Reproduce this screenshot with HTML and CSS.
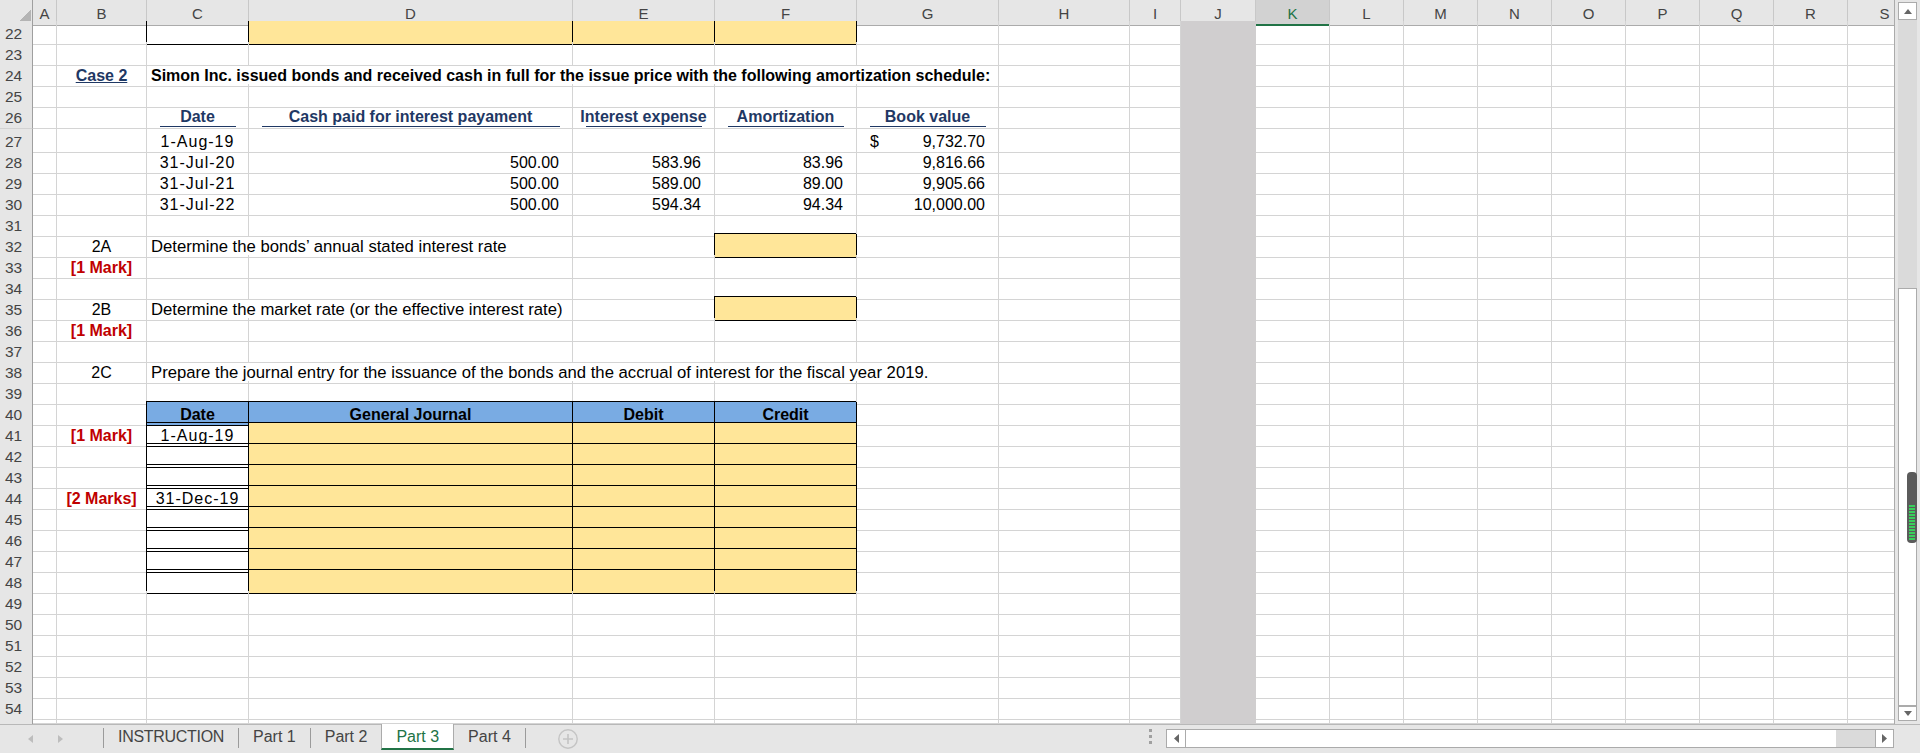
FILE: index.html
```html
<!DOCTYPE html>
<html lang="en">
<head>
<meta charset="utf-8">
<title>Part 3</title>
<link rel="stylesheet" href="styles.css">
</head>
<body>
<div class="app">
  <div class="main">
    <div class="sheet">
      <div class="row hdr"><b class="corner"></b><i>A</i><i>B</i><i>C</i><i>D</i><i>E</i><i>F</i><i>G</i><i>H</i><i>I</i><i>J</i><i class="sel">K</i><i>L</i><i>M</i><i>N</i><i>O</i><i>P</i><i>Q</i><i>R</i><i>S</i></div>
      <div class="row"><b class="rh">22</b><i></i><i></i><i class="bl"></i><i class="bl y"></i><i class="bl y"></i><i class="bl y"></i><i></i><i></i><i></i><i class="rest"></i></div>
      <div class="row"><b class="rh">23</b><i></i><i></i><i></i><i></i><i></i><i></i><i></i><i></i><i></i><i class="rest"></i></div>
      <div class="row"><b class="rh">24</b><i></i><i class="case">Case 2</i><i class="title s5">Simon Inc. issued bonds and received cash in full for the issue price with the following amortization schedule:</i><i></i><i></i><i class="rest"></i></div>
      <div class="row"><b class="rh">25</b><i></i><i></i><i></i><i></i><i></i><i></i><i></i><i></i><i></i><i class="rest"></i></div>
      <div class="row tall"><b class="rh">26</b><i></i><i></i><i class="th"><span>Date</span></i><i class="th"><span>Cash paid for interest payament</span></i><i class="th"><span>Interest expense</span></i><i class="th"><span>Amortization</span></i><i class="th"><span>Book value</span></i><i></i><i></i><i class="rest"></i></div>
      <div class="row"><b class="rh">27</b><i></i><i></i><i class="dt">1-Aug-19</i><i></i><i></i><i></i><i class="acc"><span>$</span><span>9,732.70</span></i><i></i><i></i><i class="rest"></i></div>
      <div class="row"><b class="rh">28</b><i></i><i></i><i class="dt">31-Jul-20</i><i class="num">500.00</i><i class="num">583.96</i><i class="num">83.96</i><i class="num">9,816.66</i><i></i><i></i><i class="rest"></i></div>
      <div class="row"><b class="rh">29</b><i></i><i></i><i class="dt">31-Jul-21</i><i class="num">500.00</i><i class="num">589.00</i><i class="num">89.00</i><i class="num">9,905.66</i><i></i><i></i><i class="rest"></i></div>
      <div class="row"><b class="rh">30</b><i></i><i></i><i class="dt">31-Jul-22</i><i class="num">500.00</i><i class="num">594.34</i><i class="num">94.34</i><i class="num">10,000.00</i><i></i><i></i><i class="rest"></i></div>
      <div class="row"><b class="rh">31</b><i></i><i></i><i></i><i></i><i></i><i></i><i></i><i></i><i></i><i class="rest"></i></div>
      <div class="row"><b class="rh">32</b><i></i><i class="ctr">2A</i><i class="txt s2">Determine the bonds’ annual stated interest rate</i><i></i><i class="bx y"></i><i></i><i></i><i></i><i class="rest"></i></div>
      <div class="row"><b class="rh">33</b><i></i><i class="mark">[1 Mark]</i><i></i><i></i><i></i><i></i><i></i><i></i><i></i><i class="rest"></i></div>
      <div class="row"><b class="rh">34</b><i></i><i></i><i></i><i></i><i></i><i></i><i></i><i></i><i></i><i class="rest"></i></div>
      <div class="row"><b class="rh">35</b><i></i><i class="ctr">2B</i><i class="txt s2">Determine the market rate (or the effective interest rate)</i><i></i><i class="bx y"></i><i></i><i></i><i></i><i class="rest"></i></div>
      <div class="row"><b class="rh">36</b><i></i><i class="mark">[1 Mark]</i><i></i><i></i><i></i><i></i><i></i><i></i><i></i><i class="rest"></i></div>
      <div class="row"><b class="rh">37</b><i></i><i></i><i></i><i></i><i></i><i></i><i></i><i></i><i></i><i class="rest"></i></div>
      <div class="row"><b class="rh">38</b><i></i><i class="ctr">2C</i><i class="txt s5">Prepare the journal entry for the issuance of the bonds and the accrual of interest for the fiscal year 2019.</i><i></i><i></i><i class="rest"></i></div>
      <div class="row"><b class="rh">39</b><i></i><i></i><i></i><i></i><i></i><i></i><i></i><i></i><i></i><i class="rest"></i></div>
      <div class="row"><b class="rh">40</b><i></i><i></i><i class="bx hb">Date</i><i class="bx hb">General Journal</i><i class="bx hb">Debit</i><i class="bx hb">Credit</i><i></i><i></i><i></i><i class="rest"></i></div>
      <div class="row"><b class="rh">41</b><i></i><i class="mark">[1 Mark]</i><i class="bx dt">1-Aug-19</i><i class="bx y"></i><i class="bx y"></i><i class="bx y"></i><i></i><i></i><i></i><i class="rest"></i></div>
      <div class="row"><b class="rh">42</b><i></i><i></i><i class="bx"></i><i class="bx y"></i><i class="bx y"></i><i class="bx y"></i><i></i><i></i><i></i><i class="rest"></i></div>
      <div class="row"><b class="rh">43</b><i></i><i></i><i class="bx"></i><i class="bx y"></i><i class="bx y"></i><i class="bx y"></i><i></i><i></i><i></i><i class="rest"></i></div>
      <div class="row"><b class="rh">44</b><i></i><i class="mark">[2 Marks]</i><i class="bx dt">31-Dec-19</i><i class="bx y"></i><i class="bx y"></i><i class="bx y"></i><i></i><i></i><i></i><i class="rest"></i></div>
      <div class="row"><b class="rh">45</b><i></i><i></i><i class="bx"></i><i class="bx y"></i><i class="bx y"></i><i class="bx y"></i><i></i><i></i><i></i><i class="rest"></i></div>
      <div class="row"><b class="rh">46</b><i></i><i></i><i class="bx"></i><i class="bx y"></i><i class="bx y"></i><i class="bx y"></i><i></i><i></i><i></i><i class="rest"></i></div>
      <div class="row"><b class="rh">47</b><i></i><i></i><i class="bx"></i><i class="bx y"></i><i class="bx y"></i><i class="bx y"></i><i></i><i></i><i></i><i class="rest"></i></div>
      <div class="row"><b class="rh">48</b><i></i><i></i><i class="bx"></i><i class="bx y"></i><i class="bx y"></i><i class="bx y"></i><i></i><i></i><i></i><i class="rest"></i></div>
      <div class="row"><b class="rh">49</b><i></i><i></i><i></i><i></i><i></i><i></i><i></i><i></i><i></i><i class="rest"></i></div>
      <div class="row"><b class="rh">50</b><i></i><i></i><i></i><i></i><i></i><i></i><i></i><i></i><i></i><i class="rest"></i></div>
      <div class="row"><b class="rh">51</b><i></i><i></i><i></i><i></i><i></i><i></i><i></i><i></i><i></i><i class="rest"></i></div>
      <div class="row"><b class="rh">52</b><i></i><i></i><i></i><i></i><i></i><i></i><i></i><i></i><i></i><i class="rest"></i></div>
      <div class="row"><b class="rh">53</b><i></i><i></i><i></i><i></i><i></i><i></i><i></i><i></i><i></i><i class="rest"></i></div>
      <div class="row"><b class="rh">54</b><i></i><i></i><i></i><i></i><i></i><i></i><i></i><i></i><i></i><i class="rest"></i></div>
      <div class="row part"><b class="rh"></b><i></i><i></i><i></i><i></i><i></i><i></i><i></i><i></i><i></i><i class="rest"></i></div>
    </div>
    <div class="vscroll">
      <div class="vs-btn up"><svg width="8" height="5" viewBox="0 0 8 5"><polygon points="0,5 8,5 4,0" fill="#666"/></svg></div>
      <div class="vs-track"></div>
      <div class="vs-thumb"><div class="pill"></div></div>
      <div class="vs-btn down"><svg width="8" height="5" viewBox="0 0 8 5"><polygon points="0,0 8,0 4,5" fill="#666"/></svg></div>
    </div>
  </div>
  <div class="tabbar">
    <div class="nav">
      <svg width="5" height="8" viewBox="0 0 5 8"><polygon points="5,0 5,8 0,4" fill="#bdbdbd"/></svg>
      <svg width="5" height="8" viewBox="0 0 5 8"><polygon points="0,0 0,8 5,4" fill="#bdbdbd"/></svg>
    </div>
    <span class="sep"></span>
    <span class="tab tight">INSTRUCTION</span>
    <span class="sep"></span>
    <span class="tab">Part 1</span>
    <span class="sep"></span>
    <span class="tab">Part 2</span>
    <span class="tab active">Part 3</span>
    <span class="tab">Part 4</span>
    <span class="sep"></span>
    <span class="add"><svg width="20" height="20" viewBox="0 0 20 20"><circle cx="10" cy="10" r="9.2" fill="none" stroke="#c4c4c4" stroke-width="1.4"/><path d="M10 5v10M5 10h10" stroke="#c4c4c4" stroke-width="1.6"/></svg></span>
    <span class="spacer"></span>
    <span class="grip"></span>
    <div class="hscroll">
      <span class="hs-btn l"><svg width="5" height="9" viewBox="0 0 5 9"><polygon points="5,0 5,9 0,4.5" fill="#666"/></svg></span>
      <span class="hs-thumb"></span>
      <span class="hs-track"></span>
      <span class="hs-btn r"><svg width="5" height="9" viewBox="0 0 5 9"><polygon points="0,0 0,9 5,4.5" fill="#666"/></svg></span>
    </div>
    <span class="corner2"></span>
  </div>
</div>
</body>
</html>
```
FILE: styles.css
```css
* { box-sizing: border-box; }
html, body { margin: 0; padding: 0; }
body {
  width: 1920px;
  height: 753px;
  overflow: hidden;
  background: #fff;
  color: #000;
  font-family: "Liberation Sans", Arial, sans-serif;
  font-size: 16px;
}
.app { display: flex; flex-direction: column; height: 753px; }
.main { display: flex; height: 724px; flex: none; }
.sheet {
  width: 1894px;
  flex: none;
  overflow: hidden;
  display: flex;
  flex-direction: column;
}
.row {
  display: grid;
  grid-template-columns: 33px 24px 90px 102px 324px 142px 142px 142px 131px 51px 75px repeat(9, 74px);
  height: 21px;
  flex: none;
}
.row.tall { height: 24px; }
.row.part { height: 7px; overflow: hidden; }
.row > i {
  font-style: normal;
  border-right: 1px solid #d4d4d4;
  border-bottom: 1px solid #d4d4d4;
  padding: 2px 4px 0;
  line-height: 21px;
  white-space: nowrap;
}
.row > .rh {
  font: 400 15.5px "Liberation Sans Narrow", "Liberation Sans", Arial, sans-serif;
  color: #444;
  background: #e6e6e6;
  border-right: 1px solid #9f9f9f;
  border-bottom: 1px solid #d2d2d2;
  text-align: center;
  padding: 2px 5px 0 0;
  line-height: 21px;
}
.row.part > .rh { border-bottom: 0; }
.hdr > i {
  text-align: center;
  font-family: "Liberation Sans Narrow", "Liberation Sans", Arial, sans-serif;
  font-size: 15px;
  color: #444;
  background: #e6e6e6;
  border-right-color: #c8c8c8;
  border-bottom-color: #ababab;
  padding: 3px 0 0;
}
.hdr > .sel {
  background: #d2d2d2;
  color: #217346;
  border-bottom: 2px solid #217346;
}
.row > .corner {
  background-color: #e6e6e6;
  background-image: linear-gradient(to bottom right, transparent 50%, #b4b4b4 50%);
  background-repeat: no-repeat;
  background-size: 15px 14px;
  background-position: right 1px bottom 1px;
  border-right: 1px solid #9f9f9f;
  border-bottom: 1px solid #ababab;
}
.row > .rest {
  grid-column: span 10;
  border: 0;
  padding: 0;
  background:
    linear-gradient(#d0cecf, #d0cecf) 0 0 / 75px 100% no-repeat,
    linear-gradient(#d4d4d4, #d4d4d4) 0 100% / 100% 1px no-repeat,
    repeating-linear-gradient(90deg, transparent 0 73px, #d4d4d4 73px 74px) 75px 0 / 100% 100% no-repeat;
}
.s2 { grid-column: span 2; }
.s5 { grid-column: span 5; }
.row > .txt { font-size: 16.7px; }

.row > .y { background: #ffe699; }
.row > .hb { background: #79abe3; font-weight: 700; text-align: center; }
.row > .bx {
  border-right-color: #000;
  border-bottom-color: #000;
  box-shadow: -1px -1px 0 #000;
}
.row > .bl {
  border-right-color: #000;
  border-bottom-color: #000;
  box-shadow: -1px 0 0 #000;
}
.ctr { text-align: center; }
.row > .mark { color: #c00000; font-weight: 700; text-align: center; padding: 2px 0 0; }
.dt { text-align: center; letter-spacing: 1px; }
.row > .num { text-align: right; padding-right: 13px; }
.row > .acc { display: flex; justify-content: space-between; padding: 2px 13px 0 13px; }
.case { text-align: center; font-weight: 700; color: #1f3864; text-decoration: underline; }
.title { font-weight: 700; }
.row > .th {
  display: flex;
  flex-direction: column;
  justify-content: flex-end;
  align-items: center;
  padding: 0 0 1px;
  font-weight: 700;
  color: #1f3864;
}
.th span { line-height: 18px; white-space: nowrap; }
.th::after {
  content: "";
  align-self: stretch;
  margin: 0 12px 0 13px;
  border-top: 1px solid #1f3864;
}

/* vertical scrollbar */
.vscroll {
  width: 26px;
  flex: none;
  background: #e6e6e6;
  border-left: 1px solid #ababab;
  padding: 2px 3px 3px 3px;
  display: flex;
  flex-direction: column;
}
.vs-btn {
  flex: none;
  background: #fff;
  border: 1px solid #ababab;
  display: flex;
  align-items: center;
  justify-content: center;
}
.vs-btn.up { height: 18px; }
.vs-btn.down { height: 15px; }
.vs-track { height: 268px; flex: none; background: #dadada; }
.vs-thumb {
  flex: 1;
  background: #fff;
  border: 1px solid #ababab;
  display: flex;
  flex-direction: column;
  align-items: flex-end;
}
.pill {
  width: 10px;
  height: 71px;
  margin: 183px -1px 0 0;
  border-radius: 4px;
  background: #5b5b5b;
  padding: 33px 2px 2px;
}
.pill::before {
  content: "";
  display: block;
  height: 36px;
  background: repeating-linear-gradient(#38cf5b 0 2px, #5b5b5b 2px 3px);
}

/* bottom tab bar */
.tabbar {
  flex: none;
  height: 29px;
  display: flex;
  align-items: flex-start;
  background: #e6e6e6;
  border-top: 1px solid #b8b8b8;
  font: 16px "Liberation Sans", Arial, sans-serif;
  color: #444;
}
.nav {
  width: 103px;
  flex: none;
  display: flex;
  gap: 25px;
  padding: 10px 0 0 28px;
}
.sep { width: 1px; height: 20px; margin-top: 3px; background: #9b9b9b; flex: none; }
.tab {
  flex: none;
  padding: 0 14px;
  height: 24px;
  line-height: 24px;
  white-space: nowrap;
}
.tab.tight { letter-spacing: -0.3px; }
.tab.active {
  background: #fff;
  color: #217346;
  border-left: 1px solid #ababab;
  border-right: 1px solid #ababab;
  border-bottom: 2px solid #217346;
  height: 26px;
  margin-top: -1px;
  padding-top: 1px;
  line-height: 23px;
}
.add { flex: none; margin: 4px 0 0 32px; display: flex; }
.spacer { flex: 1; }
.grip {
  flex: none;
  width: 3px;
  height: 16px;
  margin: 4px 14px 0 0;
  background: repeating-linear-gradient(#a0a0a0 0 3px, transparent 3px 6px);
}
.hscroll {
  flex: none;
  width: 728px;
  height: 19px;
  margin-top: 4px;
  display: flex;
  border: 1px solid #ababab;
  background: #fff;
}
.hs-btn { flex: none; display: flex; align-items: center; justify-content: center; }
.hs-btn.l { width: 19px; border-right: 1px solid #ababab; }
.hs-btn.r { width: 18px; border-left: 1px solid #ababab; }
.hs-thumb { flex: none; width: 650px; }
.hs-track { flex: 1; background: #dadada; }
.corner2 { flex: none; width: 26px; }
```
